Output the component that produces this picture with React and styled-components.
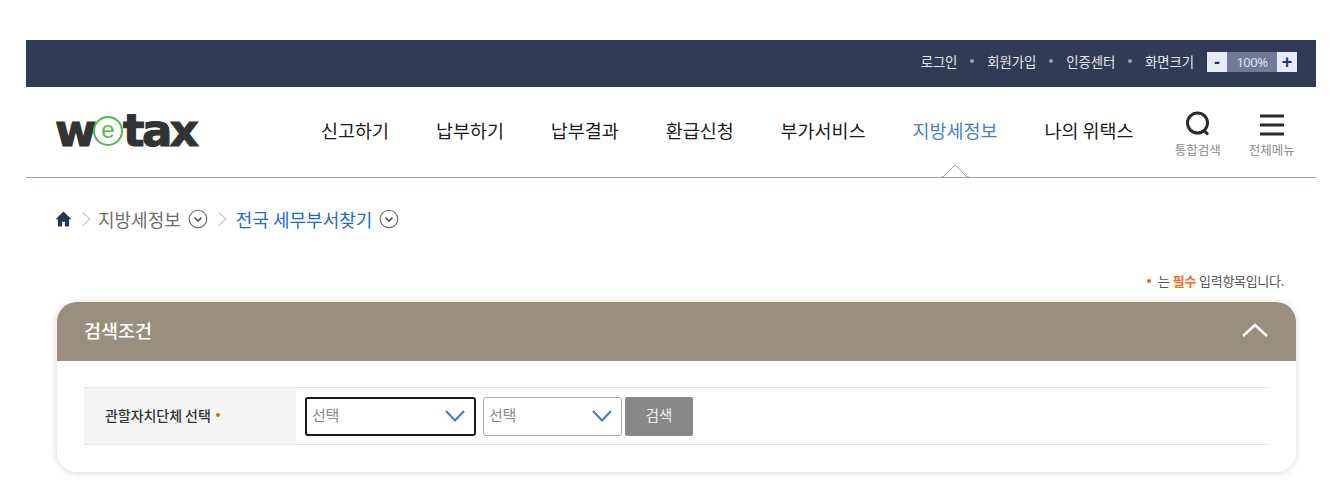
import React from 'react';
import styled, { createGlobalStyle } from 'styled-components';

const GlobalStyle = createGlobalStyle`
  html, body {
    margin: 0;
    padding: 0;
    background: #fff;
  }
  body {
    font-family: "Noto Sans CJK KR", "Noto Sans", sans-serif;
    color: #333;
  }
`;

const Page = styled.div`
  width: 1290px;
  margin-left: 26px;
  padding-top: 40px;
  padding-bottom: 27px;
`;

const TopBar = styled.div`
  height: 47px;
  background: #303c54;
  display: flex;
  justify-content: flex-end;
  align-items: center;
  padding-right: 19px;
  padding-bottom: 5px;
  box-sizing: border-box;
`;

const TopLink = styled.a`
  color: #e4e7ee;
  font-size: 13.4px;
  letter-spacing: -0.1px;
  line-height: 20px;
`;

const TopDot = styled.i`
  width: 4px;
  height: 4px;
  border-radius: 50%;
  background: #98a2b6;
  margin: 0 13px;
`;

const Zoom = styled.div`
  display: flex;
  height: 20px;
  margin-left: 13px;
  margin-top: 2px;
  background: #707a96;
`;

const ZoomButton = styled.button`
  width: 20px;
  height: 20px;
  border: 0;
  padding: 0;
  background: #e3ebf6;
  color: #1c3566;
  font: 700 18px/20px "Liberation Sans", sans-serif;
`;

const ZoomValue = styled.span`
  width: 50px;
  text-align: center;
  color: #dfe3ec;
  font: 13px/20px "Noto Sans", sans-serif;
  letter-spacing: -0.5px;
`;

const Header = styled.header`
  position: relative;
  height: 91px;
  box-sizing: border-box;
  border-bottom: 1px solid #9ba0b8;
  display: flex;
  align-items: center;
  padding: 0 0 5px 30px;
`;

const Logo = styled.div`
  width: 265px;
  display: flex;
  align-items: center;
  margin-top: 2px;
  color: #333;
  font: 700 45px/44px "DejaVu Sans", sans-serif;
  letter-spacing: -2.6px;
  -webkit-text-stroke: 1.2px #333;
`;

const LogoW = styled.span`
  margin-left: -1px;
`;

const LogoE = styled.span`
  flex: none;
  width: 30px;
  height: 30px;
  margin: 1px 0 0 -1px;
  box-sizing: border-box;
  border: 2px solid #4fb84f;
  border-radius: 50%;
  background: #fff;
  color: #4fb84f;
  display: flex;
  justify-content: center;
  align-items: center;
  font: 400 24px/24px "Liberation Sans", sans-serif;
  letter-spacing: 0;
  -webkit-text-stroke: 0;
  padding-bottom: 3px;
`;

const LogoRest = styled.span`
  margin-right: -10px;
`;

const Nav = styled.nav`
  display: flex;
  gap: 46.8px;
`;

const NavItem = styled.a`
  font-size: 18.5px;
  line-height: 28px;
  color: ${(p) => (p.$active ? '#4a7fc8' : '#1c1c1c')};
`;

const Tools = styled.div`
  display: flex;
  margin-left: 41px;
  margin-top: 9px;
  gap: 28px;
`;

const Tool = styled.div`
  width: 46px;
  display: flex;
  flex-direction: column;
  align-items: center;
  color: #888;
  font-size: 12.5px;
  line-height: 16px;
  white-space: nowrap;
`;

const ToolIcon = styled.svg`
  width: 30px;
  height: 30px;
  margin-bottom: 1px;
`;

const Caret = styled.svg`
  position: absolute;
  left: 915px;
  bottom: -1px;
  width: 28px;
  height: 15px;
`;

const Crumbs = styled.div`
  display: flex;
  align-items: center;
  height: 24px;
  margin-top: 29px;
  padding-left: 29px;
  font-size: 18px;
`;

const CrumbText = styled.span`
  color: ${(p) => (p.$current ? '#1f6ad0' : '#6e6e6e')};
  margin: 0 7px 0 ${(p) => (p.$current ? 2 : 0)}px;
`;

const HomeIcon = styled.svg`
  width: 17px;
  height: 16px;
`;

const Separator = styled.svg`
  width: 11px;
  height: 16px;
  margin: 0 6px 0 9px;
`;

const RoundChevron = styled.svg`
  width: 20px;
  height: 20px;
`;

const Notice = styled.p`
  margin: 40px 32px 0 0;
  display: flex;
  justify-content: flex-end;
  align-items: center;
  font-size: 13px;
  line-height: 20px;
  letter-spacing: -0.3px;
  color: #555;
`;

const NoticeStrong = styled.b`
  color: #e8702a;
  margin: 0 3px;
`;

const Bullet = styled.i`
  display: inline-block;
  flex: none;
  width: 4px;
  height: 4px;
  border-radius: 50%;
  background: #e8621c;
  margin: ${(p) => p.$margin};
`;

const Panel = styled.section`
  margin: 11px 20px 0 31px;
  height: 170px;
  box-sizing: border-box;
  border-radius: 20px;
  background: #fff;
  box-shadow: 0 1px 7px rgba(0, 0, 0, 0.16);
  overflow: hidden;
`;

const PanelHead = styled.div`
  height: 59px;
  box-sizing: border-box;
  background: #9a8f7e;
  display: flex;
  justify-content: space-between;
  align-items: center;
  padding: 0 27px 4px;
  color: #fff;
  font-size: 18.5px;
  font-weight: 500;
`;

const ToggleIcon = styled.svg`
  width: 28px;
  height: 18px;
`;

const FormRow = styled.div`
  margin: 26px 27px 0;
  height: 58px;
  box-sizing: border-box;
  border-top: 1px solid #e2e2e2;
  border-bottom: 1px solid #e2e2e2;
  display: flex;
`;

const Label = styled.div`
  width: 212px;
  background: #f5f5f5;
  display: flex;
  align-items: center;
  padding: 0 0 2px 21px;
  box-sizing: border-box;
  color: #333;
  font-size: 14px;
  font-weight: 500;
  letter-spacing: -0.05px;
`;

const Controls = styled.div`
  display: flex;
  align-items: center;
  padding-left: 9px;
`;

const Select = styled.div`
  box-sizing: border-box;
  width: ${(p) => p.$width}px;
  height: 39px;
  margin-right: ${(p) => p.$gap}px;
  padding: 0 8px 4px 5px;
  display: flex;
  justify-content: space-between;
  align-items: center;
  background: #fff;
  color: #8a8a8a;
  font-size: 15px;
  letter-spacing: -0.3px;
  border: ${(p) => (p.$focus ? '2px solid #1a1a1a' : '1px solid #a9a9a9')};
  border-radius: 3px;
`;

const SelectArrow = styled.svg`
  width: 22px;
  height: 14px;
  margin-top: 4px;
`;

const SearchButton = styled.button`
  width: 68px;
  height: 39px;
  border: 0;
  border-radius: 2px;
  background: #888;
  color: #f0f0f0;
  font-family: inherit;
  font-size: 14.5px;
  padding: 0 0 3px;
`;

const topLinks = ['로그인', '회원가입', '인증센터', '화면크기'];
const menus = ['신고하기', '납부하기', '납부결과', '환급신청', '부가서비스', '지방세정보', '나의 위택스'];

const Arrow = () => (
  <SelectArrow viewBox="0 0 22 14">
    <path d="M2 2l9 9.5L20 2" fill="none" stroke="#4a7cc4" strokeWidth="2.2" />
  </SelectArrow>
);

const CircleDown = () => (
  <RoundChevron viewBox="0 0 20 20">
    <circle cx="10" cy="10" r="8.8" fill="none" stroke="#6a6a6a" strokeWidth="1.1" />
    <path d="M6.5 8.5L10 12l3.5-3.5" fill="none" stroke="#555" strokeWidth="1.7" />
  </RoundChevron>
);

const Sep = () => (
  <Separator viewBox="0 0 11 16">
    <path d="M1.5 1.5L9 8l-7.5 6.5" fill="none" stroke="#aaa" strokeWidth="1" />
  </Separator>
);

export default function App() {
  return (
    <Page>
      <GlobalStyle />
      <TopBar>
        {topLinks.map((link, i) => (
          <React.Fragment key={link}>
            <TopLink>{link}</TopLink>
            {i < topLinks.length - 1 && <TopDot />}
          </React.Fragment>
        ))}
        <Zoom>
          <ZoomButton>-</ZoomButton>
          <ZoomValue>100%</ZoomValue>
          <ZoomButton>+</ZoomButton>
        </Zoom>
      </TopBar>

      <Header>
        <Logo>
          <LogoW>w</LogoW>
          <LogoE>e</LogoE>
          <LogoRest>tax</LogoRest>
        </Logo>
        <Nav>
          {menus.map((menu) => (
            <NavItem key={menu} $active={menu === '지방세정보'}>{menu}</NavItem>
          ))}
        </Nav>
        <Tools>
          <Tool>
            <ToolIcon viewBox="0 0 30 30">
              <circle cx="14.5" cy="12" r="10" fill="none" stroke="#2b2b2b" strokeWidth="3" />
              <path d="M20.5 19l4.5 4.5" stroke="#2b2b2b" strokeWidth="3" />
            </ToolIcon>
            통합검색
          </Tool>
          <Tool>
            <ToolIcon viewBox="0 0 30 30">
              <path d="M3 5h24M3 14h24M3 23h24" stroke="#2b2b2b" strokeWidth="3" />
            </ToolIcon>
            전체메뉴
          </Tool>
        </Tools>
        <Caret viewBox="0 0 28 15">
          <path d="M0 14h2L14 2l12 12h2" fill="#fff" stroke="#9ba0b8" strokeWidth="1" />
        </Caret>
      </Header>

      <Crumbs>
        <HomeIcon viewBox="0.5 0.5 16 15">
          <path d="M8.5 1L1 8.2h2.2V15h4v-4.5h2.6V15h4V8.2H16z" fill="#28365a" />
        </HomeIcon>
        <Sep />
        <CrumbText>지방세정보</CrumbText>
        <CircleDown />
        <Sep />
        <CrumbText $current>전국 세무부서찾기</CrumbText>
        <CircleDown />
      </Crumbs>

      <Notice>
        <Bullet $margin="0 7px 0 0" />
        는
        <NoticeStrong>필수</NoticeStrong>
        입력항목입니다.
      </Notice>

      <Panel>
        <PanelHead>
          검색조건
          <ToggleIcon viewBox="0 0 28 18">
            <path d="M2 15L14 4l12 11" fill="none" stroke="#fff" strokeWidth="2.4" />
          </ToggleIcon>
        </PanelHead>
        <FormRow>
          <Label>
            관할자치단체 선택
            <Bullet $margin="0 0 0 5px" />
          </Label>
          <Controls>
            <Select $width={171} $gap={7} $focus>
              선택
              <Arrow />
            </Select>
            <Select $width={139} $gap={3}>
              선택
              <Arrow />
            </Select>
            <SearchButton>검색</SearchButton>
          </Controls>
        </FormRow>
      </Panel>
    </Page>
  );
}
